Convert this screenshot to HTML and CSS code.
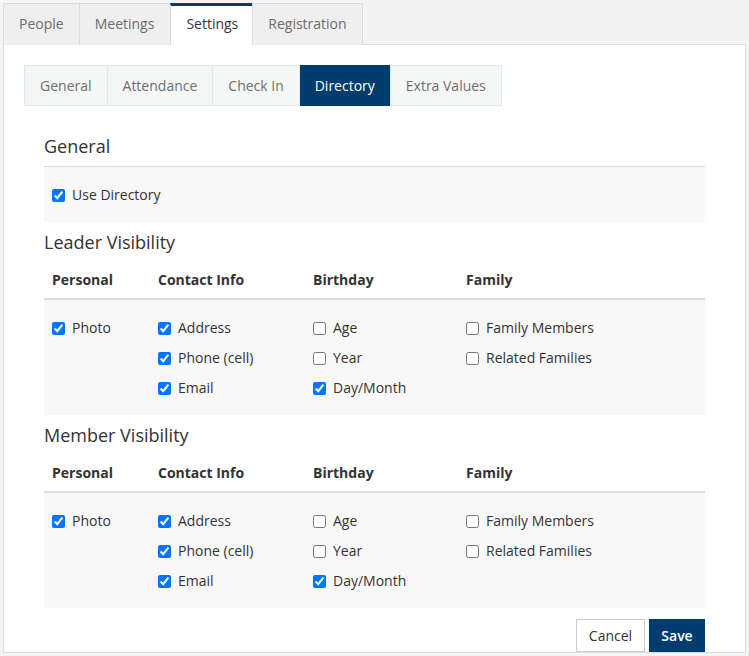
FILE: index.html
```html
<!DOCTYPE html>
<html>
<head>
<meta charset="utf-8">
<link rel="stylesheet" href="styles.css">
</head>
<body>
<div class="tabs">
  <div class="tab">People</div>
  <div class="tab">Meetings</div>
  <div class="tab active">Settings</div>
  <div class="tab">Registration</div>
</div>
<div class="panel">
  <div class="subtabs">
    <div class="subtab">General</div>
    <div class="subtab">Attendance</div>
    <div class="subtab">Check In</div>
    <div class="subtab active">Directory</div>
    <div class="subtab">Extra Values</div>
  </div>
  <div class="content">
    <h3 class="sec-title first">General</h3>
    <div class="well">
      <label class="chk"><input type="checkbox" checked>Use Directory</label>
    </div>

    <h3 class="sec-title">Leader Visibility</h3>
    <div class="vis">
      <div class="vis-head">
        <div>Personal</div><div>Contact Info</div><div>Birthday</div><div>Family</div>
      </div>
      <div class="vis-body">
        <div class="col"><label class="chk"><input type="checkbox" checked>Photo</label></div>
        <div class="col">
          <label class="chk"><input type="checkbox" checked>Address</label>
          <label class="chk"><input type="checkbox" checked>Phone (cell)</label>
          <label class="chk"><input type="checkbox" checked>Email</label>
        </div>
        <div class="col">
          <label class="chk"><input type="checkbox">Age</label>
          <label class="chk"><input type="checkbox">Year</label>
          <label class="chk"><input type="checkbox" checked>Day/Month</label>
        </div>
        <div class="col">
          <label class="chk"><input type="checkbox">Family Members</label>
          <label class="chk"><input type="checkbox">Related Families</label>
        </div>
      </div>
    </div>

    <h3 class="sec-title">Member Visibility</h3>
    <div class="vis">
      <div class="vis-head">
        <div>Personal</div><div>Contact Info</div><div>Birthday</div><div>Family</div>
      </div>
      <div class="vis-body">
        <div class="col"><label class="chk"><input type="checkbox" checked>Photo</label></div>
        <div class="col">
          <label class="chk"><input type="checkbox" checked>Address</label>
          <label class="chk"><input type="checkbox" checked>Phone (cell)</label>
          <label class="chk"><input type="checkbox" checked>Email</label>
        </div>
        <div class="col">
          <label class="chk"><input type="checkbox">Age</label>
          <label class="chk"><input type="checkbox">Year</label>
          <label class="chk"><input type="checkbox" checked>Day/Month</label>
        </div>
        <div class="col">
          <label class="chk"><input type="checkbox">Family Members</label>
          <label class="chk"><input type="checkbox">Related Families</label>
        </div>
      </div>
    </div>

    <div class="actions">
      <button class="btn btn-default">Cancel</button>
      <button class="btn btn-primary">Save</button>
    </div>
  </div>
</div>
</body>
</html>
```
FILE: styles.css
```css
* { box-sizing: border-box; }
html, body { margin: 0; }
body {
  background: #f4f4f4;
  padding: 3px 3px 0 3px;
  font-family: "Open Sans", "Liberation Sans", sans-serif;
  font-size: 14px;
  line-height: 20px;
  color: #333;
}
.tabs {
  display: flex;
  position: relative;
  z-index: 1;
  margin-bottom: -1px;
}
.tab {
  background: #efefef;
  border: 1px solid #dcdcdc;
  border-bottom: none;
  padding: 10px 15px 11px;
  color: #6b6b6b;
  margin-left: -1px;
}
.tab:first-child { margin-left: 0; }
.tab:nth-child(2) { padding-right: 16px; }
.tab.active {
  background: #fff;
  color: #333;
  border-top: 3px solid #003d6e;
  padding-top: 8px;
  padding-right: 14px;
}
.panel {
  background: #fff;
  border: 1px solid #dcdcdc;
  padding: 20px 20px 0;
}
.subtabs {
  display: flex;
}
.subtab {
  background: #f5f7f7;
  border: 1px solid #e3e8e8;
  margin-left: -1px;
  padding: 10px 15px 9px;
  color: #6e6e6e;
}
.subtab:first-child { margin-left: 0; }
.subtab.active {
  background: #003d6e;
  border-color: #003d6e;
  color: #fff;
  padding: 10px 14px 9px;
  margin-left: 0;
  margin-right: 1px;
  border-left-width: 0;
  border-right-width: 0;
  width: 90px;
  text-align: center;
}
.content {
  padding: 0 20px;
}
.sec-title {
  margin: 8px 0 0;
  font-size: 18px;
  font-weight: 400;
  line-height: 25px;
  color: #333;
}
.sec-title.first {
  margin-top: 28px;
  padding-bottom: 7px;
  border-bottom: 1px solid #dddddd;
}
.well {
  background: #f8f8f8;
  padding: 18px 8px 17px;
}
.chk {
  display: flex;
  align-items: center;
  height: 20px;
  color: #333;
}
.chk input {
  margin: 0 7px 0 0;
  width: 13px;
  height: 13px;
}
.vis-head, .vis-body {
  display: grid;
  grid-template-columns: 106px 155px 153px 1fr;
}
.vis-head {
  padding: 15px 0 8px;
  border-bottom: 2px solid #dddddd;
  font-weight: 700;
}
.vis-head > div { padding: 0 8px; }
.vis-body {
  background: #f8f8f8;
  padding: 18px 0 17px;
}
.col {
  display: flex;
  flex-direction: column;
  gap: 10px;
  padding: 0 8px;
}
.actions {
  display: flex;
  justify-content: flex-end;
  gap: 4px;
  margin-top: 11px;
}
.btn {
  font-family: inherit;
  font-size: 14px;
  line-height: 20px;
  height: 33px;
  padding: 6px 0 5px;
  border: 1px solid #cccccc;
  border-radius: 0;
  margin: 0;
  text-align: center;
}
.btn-default {
  width: 69px;
  background: #fff;
  color: #333;
}
.btn-primary {
  width: 56px;
  background: #003d6e;
  border-color: #003d6e;
  color: #fff;
  font-weight: 600;
}
```
